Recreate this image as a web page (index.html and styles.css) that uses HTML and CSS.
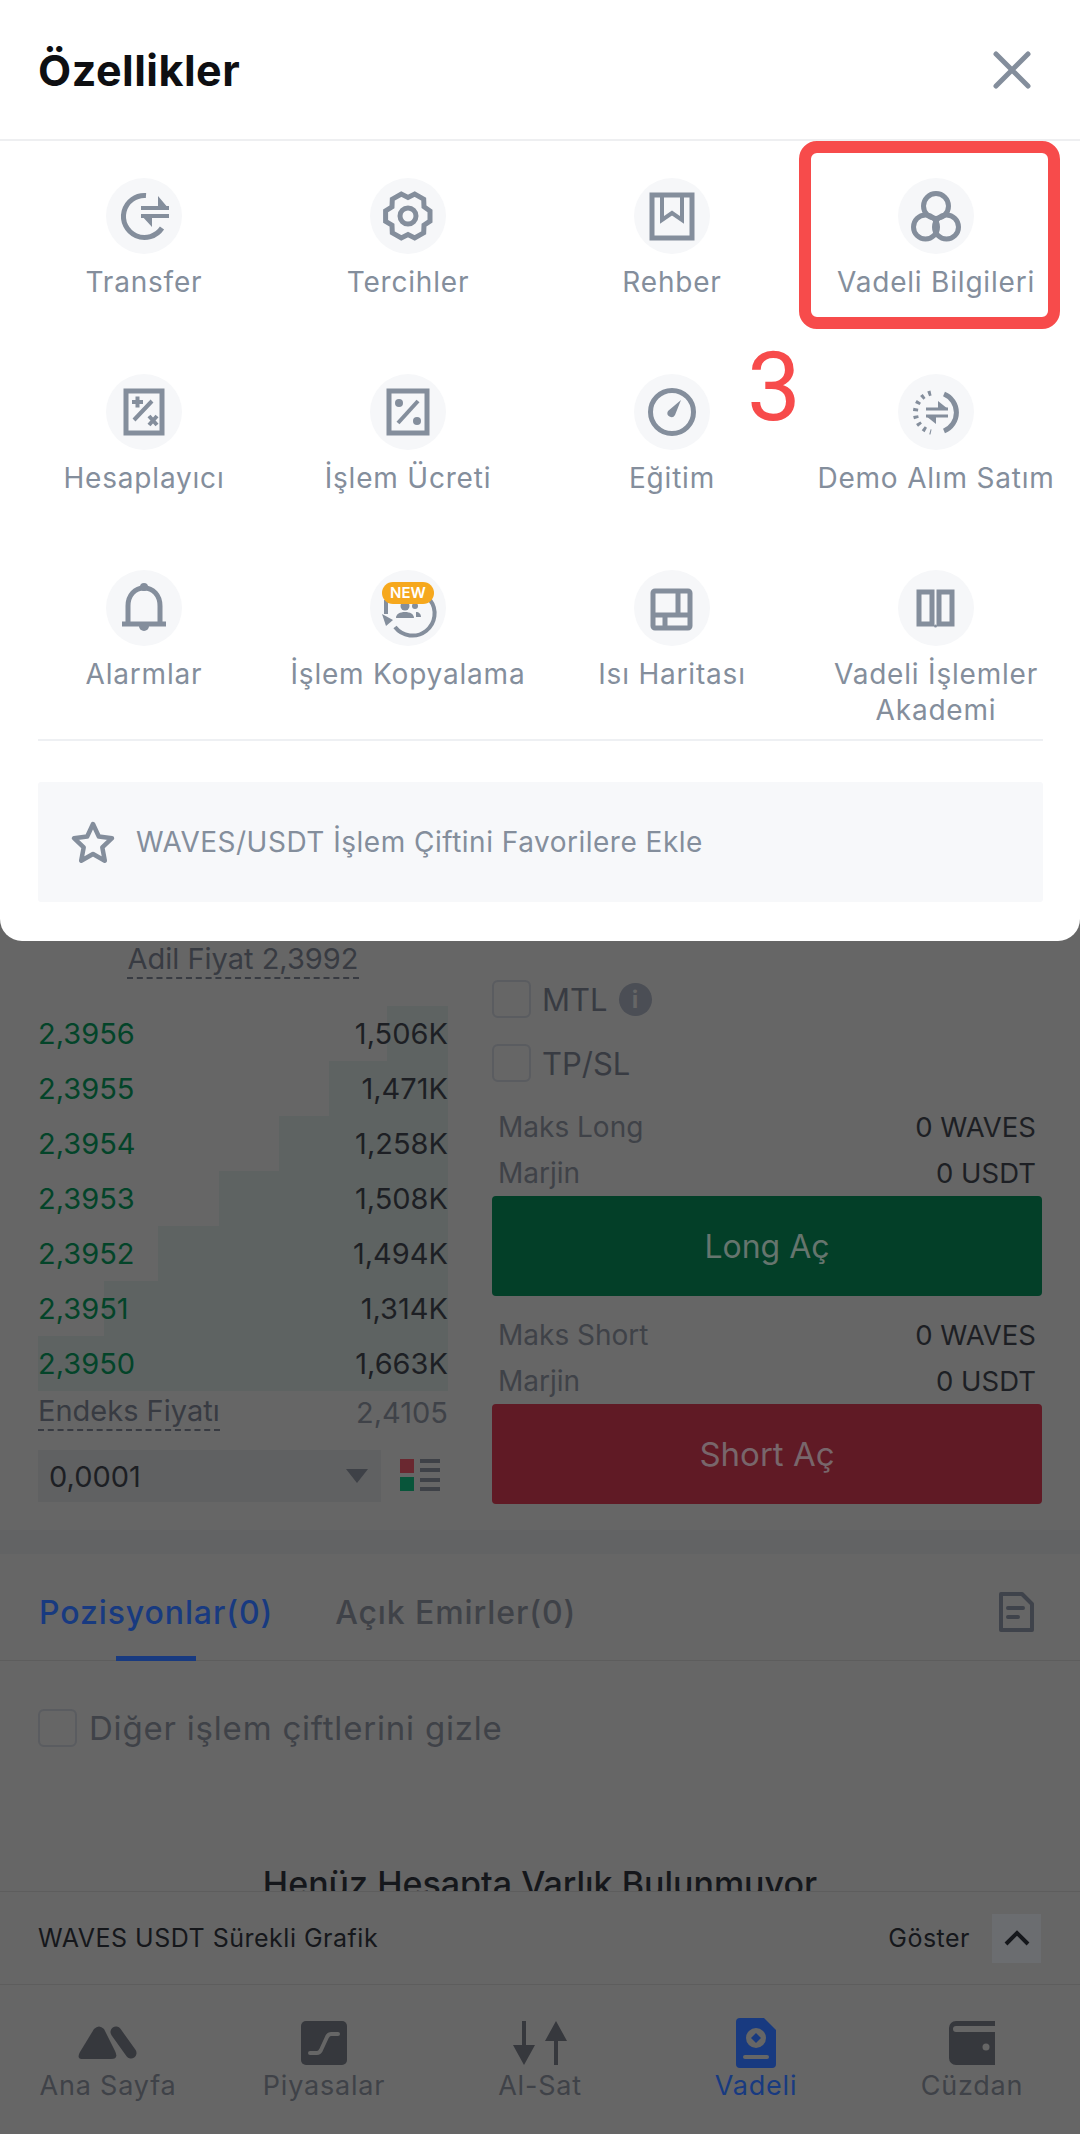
FILE: index.html
```html
<!DOCTYPE html>
<html lang="tr">
<head>
  <meta charset="UTF-8">
  <meta name="viewport" content="width=device-width, initial-scale=1.0">
  <title>Özellikler</title>
  <link rel="stylesheet" href="styles.css">
</head>
<body>
  <div class="sheet">
    <div class="sheet-head">
      <h1>Özellikler</h1>
      <svg class="close" width="38" height="38" viewBox="0 0 38 38"><path d="M3 3l32 32M35 3L3 35"/></svg>
    </div>

    <div class="grid">
      <div class="item">
        <div class="circle">
          <svg viewBox="0 0 76 76"><path class="ln" d="M40 17.500A21 21 0 1 0 56 50"/><path class="ln thin" d="M35 30h28M35 38h28"/><path class="fl" d="M52 18l11 13H52zM35 37h11v12z"/></svg>
        </div>
        <div class="label">Transfer</div>
      </div>
      <div class="item">
        <div class="circle">
          <svg viewBox="0 0 76 76"><path class="ln" d="M60 33l0 10.200-6 4 -.3 7.600-9 5.200L38 56.500 31.300 60l-9-5.200L22 47.250l-6.400-4V32.800l6.400-4 .3-7.600 9-5.200 6.700 3.500 6.700-3.500 9 5.200.3 7.550z"/><circle class="ln" cx="38" cy="38" r="8"/></svg>
        </div>
        <div class="label">Tercihler</div>
      </div>
      <div class="item">
        <div class="circle">
          <svg viewBox="0 0 76 76"><rect class="sq" x="18" y="17" width="40" height="43"/><path class="ln thin" d="M28 19v23l10-7 10 7V19"/></svg>
        </div>
        <div class="label">Rehber</div>
      </div>
      <div class="item">
        <div class="circle">
          <svg viewBox="0 0 76 76"><circle class="ln" cx="38" cy="28" r="12.500"/><circle class="ln" cx="27.500" cy="49" r="12"/><circle class="ln" cx="48.500" cy="49" r="12"/></svg>
        </div>
        <div class="label">Vadeli Bilgileri</div>
      </div>

      <div class="item">
        <div class="circle">
          <svg viewBox="0 0 76 76"><rect class="sq" x="20" y="17" width="36" height="42"/><path class="ln thin" d="M28 46l18-19M26 28h11M31.500 22.500v11M43 42l8 9M51 42l-8 9"/></svg>
        </div>
        <div class="label">Hesaplayıcı</div>
      </div>
      <div class="item">
        <div class="circle">
          <svg viewBox="0 0 76 76"><rect class="sq" x="19" y="17" width="38" height="42"/><path class="ln thin" d="M28 49l20-22"/><circle class="fl" cx="29" cy="29" r="4"/><circle class="fl" cx="47" cy="47" r="4"/></svg>
        </div>
        <div class="label">İşlem Ücreti</div>
      </div>
      <div class="item">
        <div class="circle">
          <svg viewBox="0 0 76 76"><circle class="ln" cx="38" cy="38" r="21.500"/><path class="fl" d="M47 26L41 41a4 4 0 0 1-7-4z"/></svg>
        </div>
        <div class="label">Eğitim</div>
      </div>
      <div class="item">
        <div class="circle">
          <svg viewBox="0 0 76 76"><path class="ln" d="M46 20a20 20 0 0 1 0 37"/><path class="ln dots" d="M33 19a20 20 0 0 0 0 39"/><path class="ln hair" d="M28 35h22M28 42h22"/><path class="fl" d="M40 27l10 8H40zM28 42h10v8z"/></svg>
        </div>
        <div class="label">Demo Alım Satım</div>
      </div>

      <div class="item">
        <div class="circle">
          <svg viewBox="0 0 76 76"><path class="ln" d="M22 52V36c0-11 7-18 16-18s16 7 16 18v16"/><path class="ln" d="M16 54h44"/><circle class="fl" cx="38" cy="17" r="4"/><path class="fl" d="M33 56h10a5 5 0 0 1-10 0z"/></svg>
        </div>
        <div class="label">Alarmlar</div>
      </div>
      <div class="item">
        <div class="circle">
          <svg viewBox="0 0 76 76"><path class="ln thin" d="M60 30A22 22 0 0 1 25 57M16 30v14"/><path class="fl" d="M12 44l11 6-7 6z"/><circle class="fl" cx="35" cy="36" r="4.500"/><circle class="fl" cx="45" cy="36" r="3"/><path class="fl" d="M26 48c0-4 4-6 9-6s9 2 9 6zM46 42c3 0 5 2 5 5h-5z"/></svg>
          <span class="new">NEW</span>
        </div>
        <div class="label">İşlem Kopyalama</div>
      </div>
      <div class="item">
        <div class="circle">
          <svg viewBox="0 0 76 76"><rect class="ln" x="19" y="21" width="37" height="37" rx="2"/><path class="ln" d="M44 21v24M19 45h37M31 45v13"/></svg>
        </div>
        <div class="label">Isı Haritası</div>
      </div>
      <div class="item">
        <div class="circle">
          <svg viewBox="0 0 76 76"><path class="sq" d="M21 22h13v32H21zM41 22h13v32H41z"/><circle class="fl" cx="37.500" cy="56" r="1.500"/></svg>
        </div>
        <div class="label">Vadeli İşlemler<br>Akademi</div>
      </div>
    </div>

    <div class="rule"></div>

    <div class="fav">
      <svg width="46" height="44" viewBox="0 0 46 44"><path d="M23 4l5.800 12.500 13.200 1.700-9.700 9.200 2.500 13.300L23 34l-11.800 6.700 2.500-13.300L4 18.200l13.200-1.700z"/></svg>
      <span>WAVES/USDT İşlem Çiftini Favorilere Ekle</span>
    </div>

    <div class="callout"></div>
    <div class="callout-num">3</div>
  </div>

  <div class="trade">
    <div class="book">
      <div class="fair"><span class="dashed">Adil Fiyat 2,3992</span></div>
      <div class="rows">
        <div class="row"><div class="depth" style="width: 14.8%"></div><span class="price">2,3956</span><span class="qty">1,506K</span></div>
        <div class="row"><div class="depth" style="width: 29%"></div><span class="price">2,3955</span><span class="qty">1,471K</span></div>
        <div class="row"><div class="depth" style="width: 41.2%"></div><span class="price">2,3954</span><span class="qty">1,258K</span></div>
        <div class="row"><div class="depth" style="width: 55.8%"></div><span class="price">2,3953</span><span class="qty">1,508K</span></div>
        <div class="row"><div class="depth" style="width: 70.7%"></div><span class="price">2,3952</span><span class="qty">1,494K</span></div>
        <div class="row"><div class="depth" style="width: 83.9%"></div><span class="price">2,3951</span><span class="qty">1,314K</span></div>
        <div class="row"><div class="depth" style="width: 100%"></div><span class="price">2,3950</span><span class="qty">1,663K</span></div>
      </div>
      <div class="index">
        <span class="dashed">Endeks Fiyatı</span>
        <span>2,4105</span>
      </div>
      <div class="tick">
        <div class="select">
          <span>0,0001</span>
          <svg width="22" height="14" viewBox="0 0 22 14"><path d="M0 0h22L11 14z"/></svg>
        </div>
        <svg class="layout" width="40" height="34" viewBox="0 0 40 34">
          <rect class="r" x="0" y="0" width="14" height="14"/>
          <rect class="g" x="0" y="18" width="14" height="14"/>
          <path d="M20 2h20M20 11h20M20 21h20M20 30h20"/>
        </svg>
      </div>
    </div>

    <div class="form">
      <div class="check"><i class="box"></i><span>MTL</span><b class="info">i</b></div>
      <div class="check second"><i class="box"></i><span>TP/SL</span></div>

      <div class="stats first">
        <div class="stat"><span>Maks Long</span><strong>0 WAVES</strong></div>
        <div class="stat"><span>Marjin</span><strong>0 USDT</strong></div>
      </div>
      <button class="btn long">Long Aç</button>

      <div class="stats">
        <div class="stat"><span>Maks Short</span><strong>0 WAVES</strong></div>
        <div class="stat"><span>Marjin</span><strong>0 USDT</strong></div>
      </div>
      <button class="btn short">Short Aç</button>
    </div>
  </div>

  <div class="band"></div>

  <div class="tabs">
    <div class="tab active">Pozisyonlar(0)</div>
    <div class="tab">Açık Emirler(0)</div>
    <svg class="doc" width="36" height="42" viewBox="0 0 36 42"><path d="M3 3h21l10 10v26H3z"/><path d="M10 17h15M10 26h10"/></svg>
  </div>

  <div class="positions">
    <div class="hide"><i class="box"></i><span>Diğer işlem çiftlerini gizle</span></div>
    <div class="empty">Henüz Hesapta Varlık Bulunmuyor</div>
  </div>

  <div class="chart-bar">
    <span>WAVES USDT Sürekli Grafik</span>
    <div class="chart-show">
      <span>Göster</span>
      <div class="chev">
        <svg width="26" height="16" viewBox="0 0 26 16"><path d="M2 14L13 3l11 11"/></svg>
      </div>
    </div>
  </div>

  <div class="nav">
    <div class="nav-item">
      <div class="nav-icon">
        <svg width="60" height="36" viewBox="0 0 60 36"><path d="M16 4q5-5 10 0l11 22q4 8-4 8H5q-7 0-3-7z"/><path class="bar" d="M38 7l15 21" /></svg>
      </div>
      <span>Ana Sayfa</span>
    </div>
    <div class="nav-item">
      <div class="nav-icon">
        <svg width="46" height="44" viewBox="0 0 46 44"><rect width="46" height="44" rx="5"/><path class="cut" d="M9 32h7c2 0 3-1 4-3l6-13c1-2 2-3 4-3h7"/></svg>
      </div>
      <span>Piyasalar</span>
    </div>
    <div class="nav-item">
      <div class="nav-icon">
        <svg width="54" height="44" viewBox="0 0 54 44"><path d="M9 0h4v24h9L11 44 0 24h9zM41 44V20h-9L43 0l11 20h-9v24z"/></svg>
      </div>
      <span>Al-Sat</span>
    </div>
    <div class="nav-item current">
      <div class="nav-icon">
        <svg width="40" height="50" viewBox="0 0 40 50"><path d="M4 0h24l12 12v34a4 4 0 0 1-4 4H4a4 4 0 0 1-4-4V4a4 4 0 0 1 4-4z"/><circle class="hole" cx="20" cy="20" r="10"/><path d="M20 15l5 5-5 5-5-5z"/><rect class="hole" x="7" y="37" width="26" height="4" rx="2"/></svg>
      </div>
      <span>Vadeli</span>
    </div>
    <div class="nav-item">
      <div class="nav-icon">
        <svg width="46" height="44" viewBox="0 0 46 44"><path d="M7 0h39v5H7a3 3 0 0 0 0 6h39v33H7a7 7 0 0 1-7-7V7a7 7 0 0 1 7-7z"/><circle class="hole" cx="37" cy="26" r="3.500"/></svg>
      </div>
      <span>Cüzdan</span>
    </div>
  </div>
</body>
</html>
```

FILE: styles.css
```css
* {
  box-sizing: border-box;
}

body {
  margin: 0;
  background: #666666;
  font-family: 'Inter', 'Noto Sans', sans-serif;
  color: #1d1f24;
  width: 1080px;
  height: 2134px;
  overflow: hidden;
}

/* top sheet */
.sheet {
  position: relative;
  height: 941px;
  background: white;
  border-radius: 0 0 22px 22px;
}

.sheet-head {
  height: 141px;
  padding: 0 49px 0 38px;
  border-bottom: 2px solid #eeeff1;
  display: flex;
  align-items: center;
  justify-content: space-between;
}

.sheet-head h1 {
  margin: 0;
  font-size: 43px;
  font-weight: 700;
  letter-spacing: 0.5px;
  color: #0e0f12;
}

.close path {
  fill: none;
  stroke: #848e9c;
  stroke-width: 5;
  stroke-linecap: round;
}

.grid {
  margin-left: 12px;
  padding-top: 37px;
  display: grid;
  grid-template-columns: repeat(4, 264px);
  grid-template-rows: 196px 196px 169px;
}

.item {
  display: flex;
  flex-direction: column;
  align-items: center;
}

.circle {
  position: relative;
  width: 76px;
  height: 76px;
  border-radius: 50%;
  background: #f6f7f9;
}

.circle svg {
  display: block;
  width: 76px;
  height: 76px;
}

.ln {
  fill: none;
  stroke: #848e9c;
  stroke-width: 5;
}

.thin {
  stroke-width: 4;
}

.hair {
  stroke-width: 3;
}

.dots {
  stroke-dasharray: 3 4.5;
}

.sq {
  fill: none;
  stroke: #848e9c;
  stroke-width: 5;
}

.fl {
  fill: #848e9c;
}

.new {
  position: absolute;
  left: 12px;
  top: 12px;
  width: 52px;
  height: 22px;
  border-radius: 11px;
  background: #f6a81d;
  color: white;
  font-size: 15px;
  font-weight: 600;
  line-height: 22px;
  text-align: center;
}

.label {
  margin-top: 10px;
  font-size: 28px;
  line-height: 36px;
  letter-spacing: 0.8px;
  color: #848e9c;
  text-align: center;
  white-space: nowrap;
}

.rule {
  margin: 0 37px 0 38px;
  height: 2px;
  background: #eef0f3;
}

.fav {
  margin: 41px 37px 0 38px;
  height: 120px;
  padding: 0 0 0 32px;
  background: #f7f8fa;
  border-radius: 3px;
  display: flex;
  align-items: center;
  gap: 20px;
  font-size: 28px;
  letter-spacing: 0.5px;
  color: #848e9c;
}

.fav svg path {
  fill: none;
  stroke: #848e9c;
  stroke-width: 4.5;
  stroke-linejoin: round;
}

.callout {
  position: absolute;
  left: 799px;
  top: 141px;
  width: 261px;
  height: 188px;
  border: 12px solid #f74b4b;
  border-radius: 18px;
}

.callout-num {
  position: absolute;
  left: 747px;
  top: 332px;
  font-family: 'Roboto', sans-serif;
  font-size: 96px;
  font-weight: 400;
  line-height: 110px;
  color: #f74b4b;
}

/* dimmed page below the sheet */
.trade {
  height: 589px;
  display: flex;
}

.book {
  width: 410px;
  margin-left: 38px;
  font-size: 29px;
}

.dashed {
  padding-bottom: 1px;
  border-bottom: 2px dashed #383b42;
  color: #383b42;
}

.fair {
  height: 38px;
  text-align: center;
  line-height: 36px;
}

.rows {
  margin-top: 27px;
}

.row {
  position: relative;
  height: 55px;
  display: flex;
  align-items: center;
  justify-content: space-between;
}

.depth {
  position: absolute;
  top: 0;
  right: 0;
  bottom: 0;
  background: #5e6362;
}

.price,
.qty {
  position: relative;
}

.price {
  color: #034429;
}

.qty {
  color: #1d1f24;
}

.index {
  height: 42px;
  display: flex;
  align-items: center;
  justify-content: space-between;
  color: #3f4248;
}

.tick {
  margin-top: 17px;
  display: flex;
  align-items: center;
  gap: 19px;
}

.select {
  width: 343px;
  height: 52px;
  padding: 0 13px 0 11px;
  background: #606162;
  display: flex;
  align-items: center;
  justify-content: space-between;
  color: #1d1f24;
}

.select path {
  fill: #3e4147;
}

.layout path {
  fill: none;
  stroke: #3e4147;
  stroke-width: 4;
}

.layout .r {
  fill: #6a2830;
}

.layout .g {
  fill: #08553a;
}

.form {
  width: 550px;
  margin-left: 44px;
  padding-top: 39px;
  font-size: 28px;
}

.check {
  height: 38px;
  display: flex;
  align-items: center;
  gap: 11px;
  font-size: 31px;
  color: #383b42;
}

.check.second {
  margin-top: 26px;
}

.box {
  display: block;
  width: 39px;
  height: 38px;
  border: 2px solid #5a5c60;
  border-radius: 6px;
}

.info {
  width: 33px;
  height: 33px;
  border-radius: 50%;
  background: #4b4e55;
  color: #666666;
  font-size: 24px;
  line-height: 33px;
  text-align: center;
}

.stats {
  margin-top: 16px;
}

.stats.first {
  margin-top: 22px;
}

.stat {
  height: 46px;
  padding: 0 6px;
  display: flex;
  align-items: center;
  justify-content: space-between;
  color: #3f4248;
}

.stat strong {
  font-size: 27.500px;
  font-weight: 400;
  color: #1d1f24;
}

.btn {
  display: block;
  width: 550px;
  height: 100px;
  border: none;
  border-radius: 4px;
  font-family: inherit;
  font-size: 32px;
  color: #66756e;
}

.long {
  background: #033f28;
}

.short {
  background: #601a25;
  font-size: 33px;
  color: #78666b;
}

.band {
  height: 24px;
  background: #626364;
}

.tabs {
  height: 107px;
  padding: 10px 46px 0 39px;
  border-bottom: 1px solid #5d5d5d;
  display: flex;
  align-items: center;
  gap: 62px;
}

.tab {
  position: relative;
  font-size: 32px;
  font-weight: 500;
  letter-spacing: 0.9px;
  color: #3f4248;
  line-height: 97px;
}

.tab.active {
  color: #183a80;
}

.tab.active::after {
  content: "";
  position: absolute;
  left: 77px;
  bottom: 0;
  width: 80px;
  height: 5px;
  background: #183a80;
}

.doc {
  margin-left: auto;
}

.doc path {
  fill: none;
  stroke: #3f434b;
  stroke-width: 4;
  stroke-linejoin: round;
  stroke-linecap: round;
}

.positions {
  height: 230px;
  padding-top: 47px;
  overflow: hidden;
}

.hide {
  height: 39px;
  margin-left: 38px;
  display: flex;
  align-items: center;
  gap: 12px;
  font-size: 33px;
  letter-spacing: 0.8px;
  color: #3f4248;
}

.empty {
  margin-top: 116px;
  font-size: 34px;
  font-weight: 500;
  line-height: 42px;
  text-align: center;
  color: #15171b;
}

.chart-bar {
  height: 93px;
  padding: 0 39px 0 38px;
  border-top: 1px solid #5d5d5d;
  display: flex;
  align-items: center;
  justify-content: space-between;
  font-size: 25px;
  letter-spacing: 0.5px;
  color: #15171b;
}

.chart-show {
  display: flex;
  align-items: center;
  gap: 22px;
}

.chev {
  width: 49px;
  height: 49px;
  background: #6b6d70;
  display: flex;
  align-items: center;
  justify-content: center;
}

.chev path {
  fill: none;
  stroke: #15171b;
  stroke-width: 4;
}

.nav {
  height: 150px;
  padding-top: 33px;
  border-top: 1px solid #5d5d5d;
  display: grid;
  grid-template-columns: repeat(5, 216px);
}

.nav-item {
  display: flex;
  flex-direction: column;
  align-items: center;
  font-size: 27px;
  letter-spacing: 0.8px;
  color: #3f4248;
}

.nav-item span {
  margin-top: 2px;
  line-height: 32px;
}

.nav-icon {
  height: 50px;
  display: flex;
  align-items: center;
  justify-content: center;
}

.nav-icon svg {
  fill: #36383d;
}

.nav-icon .bar {
  fill: none;
  stroke: #36383d;
  stroke-width: 11;
  stroke-linecap: round;
}

.nav-icon .cut {
  fill: none;
  stroke: #666666;
  stroke-width: 4;
  stroke-linecap: round;
}

.nav-icon .hole {
  fill: #666666;
}

.nav-item.current {
  color: #183a80;
}

.nav-item.current svg {
  fill: #183a80;
}
```
